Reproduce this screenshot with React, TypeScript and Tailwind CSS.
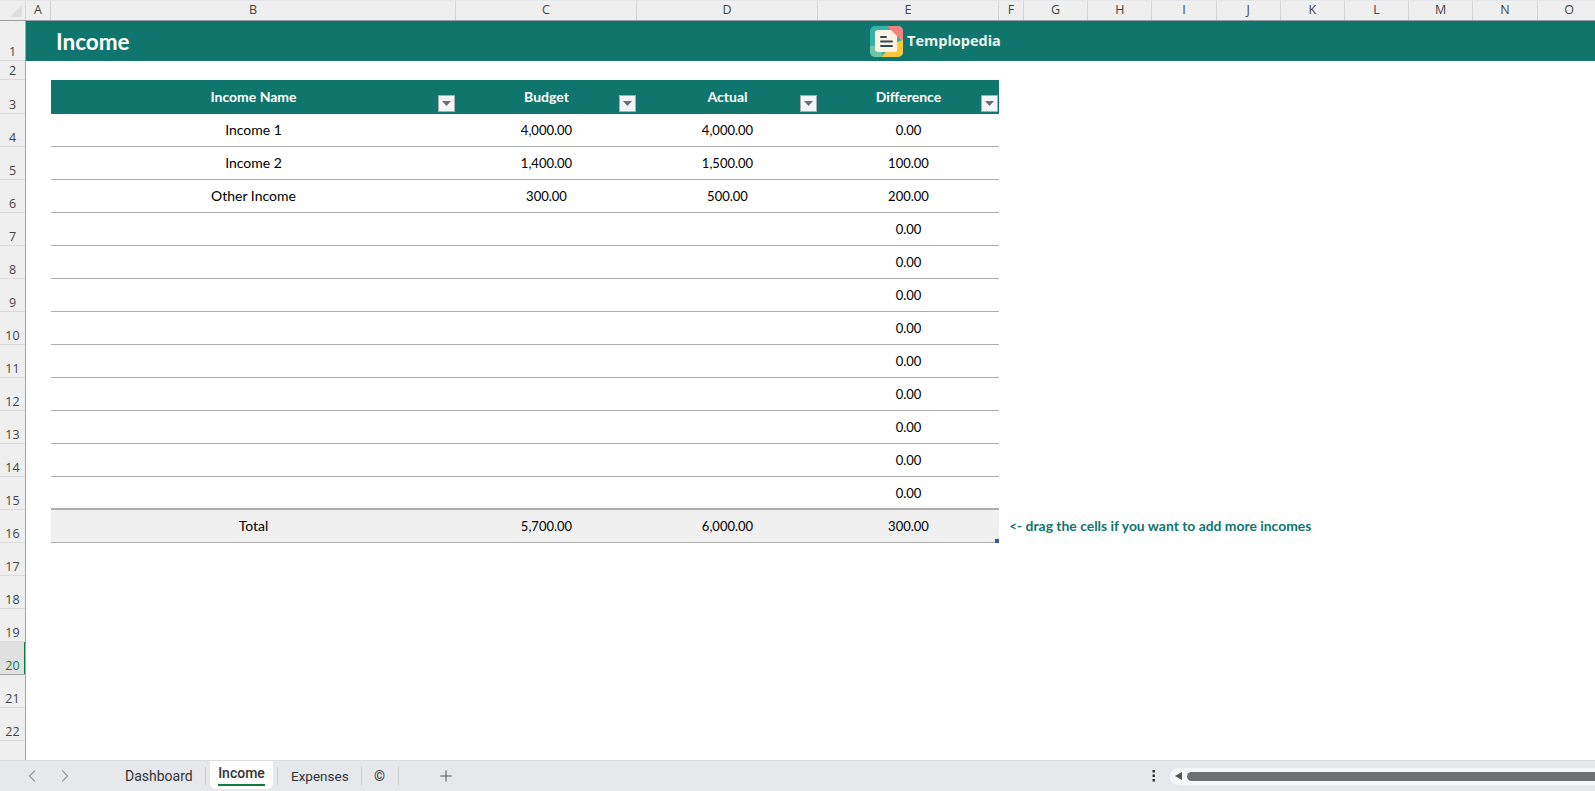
import { ChevronLeft, ChevronRight, Plus } from "lucide-react";

const segoe = { fontFamily: '"Open Sans", "Noto Sans", sans-serif' };
const tabFont = { fontFamily: 'Roboto, "Open Sans", sans-serif' };

const columns = [
    { label: "A", width: "w-[25px]" },
    { label: "B", width: "w-[405px]" },
    { label: "C", width: "w-[181px]" },
    { label: "D", width: "w-[181px]" },
    { label: "E", width: "w-[181px]" },
    { label: "F", width: "w-[25px]" },
    { label: "G", width: "w-[64.2px]" },
    { label: "H", width: "w-[64.2px]" },
    { label: "I", width: "w-[64.2px]" },
    { label: "J", width: "w-[64.2px]" },
    { label: "K", width: "w-[64.2px]" },
    { label: "L", width: "w-[64.2px]" },
    { label: "M", width: "w-[64.2px]" },
    { label: "N", width: "w-[64.2px]" },
    { label: "O", width: "w-[64.2px]" },
];

const rowHeights = [
    { n: 1, h: "h-[40px]" },
    { n: 2, h: "h-[19px]" },
    { n: 3, h: "h-[34px]" },
    ...Array.from({ length: 19 }, (_, i) => ({ n: i + 4, h: "h-[33px]" })),
];

const incomes = [
    { name: "Income 1", budget: "4,000.00", actual: "4,000.00", diff: "0.00" },
    { name: "Income 2", budget: "1,400.00", actual: "1,500.00", diff: "100.00" },
    { name: "Other Income", budget: "300.00", actual: "500.00", diff: "200.00" },
    ...Array.from({ length: 9 }, () => ({ name: "", budget: "", actual: "", diff: "0.00" })),
];

function FilterButton() {
    return (
        <span className="absolute right-[1px] bottom-[2px] flex h-[17px] w-[17px] items-center justify-center border border-[#a8adb4] bg-[#f3f5f8]">
            <svg width="9" height="5" viewBox="0 0 9 5">
                <path d="M0 0h9L4.5 5z" fill="#6b6f75" />
            </svg>
        </span>
    );
}

function Logo() {
    return (
        <svg width="33" height="31" viewBox="0 0 33 31" className="shrink-0">
            <rect x="0" y="0" width="33" height="31" rx="5" fill="#36b3a6" />
            <path d="M17 0h11a5 5 0 0 1 5 5v11z" fill="#f4837d" />
            <path d="M33 14v12a5 5 0 0 1-5 5H11l14-14z" fill="#fbc73f" />
            <path d="M0 20l12 0 0 11H5a5 5 0 0 1-5-5z" fill="#6fc4a2" />
            <path d="M8 4h13l6 6v14a2 2 0 0 1-2 2H8a3 3 0 0 1-3-3V7a3 3 0 0 1 3-3z" fill="#fdf3e3" />
            <rect x="10" y="10" width="7" height="2" rx="1" fill="#2f4b5c" />
            <rect x="10" y="14.5" width="13" height="2" rx="1" fill="#2f4b5c" />
            <rect x="10" y="19" width="13" height="2" rx="1" fill="#2f4b5c" />
        </svg>
    );
}

function Separator() {
    return <span className="h-[18px] w-px shrink-0 bg-[#c9ccd1]" />;
}

export default function App() {
    return (
        <div className="flex h-[791px] w-[1595px] flex-col overflow-hidden bg-white" style={segoe}>
            {/* Encabezado de columnas */}
            <div className="flex h-[21px] shrink-0 border-t border-b border-t-[#e4e6ea] border-b-[#9d9d9d] bg-[#efefef]">
                <div className="flex w-[26px] shrink-0 items-end justify-end border-r border-[#d4d4d4] pr-[3px] pb-[3px]">
                    <span className="h-0 w-0 border-b-[12px] border-l-[12px] border-b-[#dedede] border-l-transparent" />
                </div>
                {columns.map((c) => (
                    <div
                        key={c.label}
                        className={`flex shrink-0 items-center justify-center border-r border-[#d4d4d4] text-[12.5px] text-[#444] ${c.width}`}
                    >
                        {c.label}
                    </div>
                ))}
            </div>

            <div className="flex min-h-0 flex-1">
                {/* Encabezado de filas */}
                <div className="w-[26px] shrink-0 overflow-hidden border-r border-[#a6a6a6] bg-[#efefef]">
                    {rowHeights.map((r) => (
                        <div
                            key={r.n}
                            className={`flex items-end justify-center border-b text-[12.5px] leading-[17px] ${r.h} ${
                                r.n === 20
                                    ? "relative border-[#a6a6a6] bg-[#e1e1e1] text-[#107c41]"
                                    : "border-[#dcdcdc] text-[#444]"
                            }`}
                        >
                            {r.n}
                            {r.n === 20 && <span className="absolute top-0 right-[-1px] bottom-0 w-[2px] bg-[#107c41]" />}
                        </div>
                    ))}
                </div>

                {/* Hoja */}
                <div className="min-w-0 flex-1" style={{ fontFamily: 'Lato, "Noto Sans", sans-serif' }}>
                    <div className="flex h-[40px] items-center bg-[#10756c]">
                        <h1 className="w-[844px] shrink-0 pt-[2px] pl-[30px] text-[22.5px] font-bold text-white">Income</h1>
                        <Logo />
                        <span className="ml-[4px] text-[14.5px] font-bold text-[#eef3ef]" style={segoe}>Templopedia</span>
                    </div>

                    <div className="ml-[25px] w-[948px] pt-[19px] text-[14px] text-black">
                        <div className="flex h-[34px] items-center bg-[#10756c] text-center font-bold text-white">
                            <div className="relative flex h-full w-[405px] items-center justify-center pb-[2px]">Income Name<FilterButton /></div>
                            <div className="relative flex h-full w-[181px] items-center justify-center pb-[2px]">Budget<FilterButton /></div>
                            <div className="relative flex h-full w-[181px] items-center justify-center pb-[2px]">Actual<FilterButton /></div>
                            <div className="relative flex h-full w-[181px] items-center justify-center pb-[2px]">Difference<FilterButton /></div>
                        </div>

                        {incomes.map((row, i) => (
                            <div
                                key={i}
                                className={`flex h-[33px] items-center border-[#adadad] text-center ${
                                    i === incomes.length - 1 ? "border-b-2" : "border-b"
                                }`}
                            >
                                <div className="w-[405px] pb-[2px]">{row.name}</div>
                                <div className="w-[181px] pt-[2px] text-[13px]">{row.budget}</div>
                                <div className="w-[181px] pt-[2px] text-[13px]">{row.actual}</div>
                                <div className="w-[181px] pt-[2px] text-[13px]">{row.diff}</div>
                            </div>
                        ))}

                        <div className="flex h-[33px] w-[1300px] items-center">
                            <div className="relative flex h-full w-[948px] shrink-0 items-center border-b border-[#adadad] bg-[#f0f0f0] text-center">
                                <div className="w-[405px] pb-[2px]">Total</div>
                                <div className="w-[181px] pt-[1px] text-[13px]">5,700.00</div>
                                <div className="w-[181px] pt-[1px] text-[13px]">6,000.00</div>
                                <div className="w-[181px] pt-[1px] text-[13px]">300.00</div>
                                <span className="absolute right-0 bottom-[-1px] h-[4px] w-[4px] bg-[#3f51a5]" />
                            </div>
                            <span className="ml-[10px] text-[13.9px] font-bold whitespace-nowrap text-[#10756c]">
                                {"<- drag the cells if you want to add more incomes"}
                            </span>
                        </div>
                    </div>
                </div>
            </div>

            {/* Barra de pestañas */}
            <div className="flex h-[31px] shrink-0 items-center border-t border-[#dcdde0] bg-[#e6e8ec] text-[14px] text-[#333]" style={tabFont}>
                <div className="flex w-[125px] shrink-0 items-center pl-[22px] text-[#9a9ca0]">
                    <ChevronLeft className="h-5 w-5" strokeWidth={1.5} />
                    <ChevronRight className="ml-[13px] h-5 w-5" strokeWidth={1.5} />
                </div>
                <span className="mt-[1px] w-[80px] shrink-0">Dashboard</span>
                <Separator />
                <div className="mx-[4px] flex h-[28px] w-[63px] shrink-0 flex-col items-center self-start rounded-b-md bg-white">
                    <span className="mt-[2px] leading-[20px] font-medium text-[#333]">Income</span>
                    <span className="mt-[1px] h-[2px] w-[47px] bg-[#107c41]" />
                </div>
                <Separator />
                <span className="mt-[1px] w-[83px] shrink-0 pl-[13px] text-[13.5px]">Expenses</span>
                <Separator />
                <span className="mt-[1px] w-[36px] shrink-0 pl-[12px]">©</span>
                <Separator />
                <Plus className="ml-[38px] h-[18px] w-[18px] text-[#444]" strokeWidth={1.25} />

                <svg width="4" height="12" viewBox="0 0 4 12" className="ml-[697px] shrink-0">
                    <rect x="0.5" y="0" width="2.5" height="2.5" fill="#333" />
                    <rect x="0.5" y="4.5" width="2.5" height="2.5" fill="#333" />
                    <rect x="0.5" y="9" width="2.5" height="2.5" fill="#333" />
                </svg>
                <div className="ml-[14px] flex h-[17px] flex-1 items-center rounded-l-full bg-[#f5f6f7] pl-[5px]">
                    <span className="h-0 w-0 border-y-[4.5px] border-r-[7px] border-y-transparent border-r-[#555]" />
                    <span className="ml-[5px] h-[9px] flex-1 rounded-l-full bg-[#6f6f6f]" />
                </div>
            </div>
        </div>
    );
}
